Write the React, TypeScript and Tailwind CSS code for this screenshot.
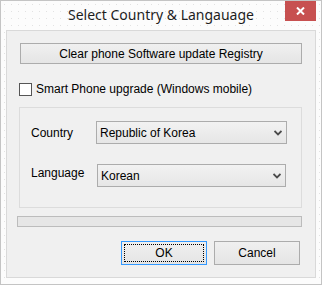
import { useState } from 'react'

const ui = { fontFamily: "'Liberation Sans', Arial, sans-serif" }

function Chevron() {
  return (
    <svg width="8" height="6" viewBox="0 0 8 6" className="shrink-0">
      <path d="M0.5 1 L4 4.5 L7.5 1" fill="none" stroke="#4a4a4a" strokeWidth="1.8" />
    </svg>
  )
}

function Select({ value, className }: { value: string; className: string }) {
  return (
    <div
      className={`flex h-[23px] items-center justify-between border border-[#acacac] bg-gradient-to-b from-[#f2f2f2] to-[#e6e6e6] pl-[3px] pr-[4px] text-[12px] text-black ${className}`}
    >
      <span>{value}</span>
      <Chevron />
    </div>
  )
}

export default function App() {
  const [smart, setSmart] = useState(false)

  return (
    <div
      style={ui}
      className="flex h-[285px] w-[322px] flex-col border border-[#c4c4c4] bg-[#fcfcfc] bg-[radial-gradient(circle,#e2e2e2_0.7px,transparent_1px)] bg-[length:7px_7px]"
    >
      <div className="grid h-[29px] grid-cols-[1fr_auto_1fr]">
        <div />
        <div
          style={{ fontFamily: "'Noto Sans', 'Open Sans', sans-serif" }}
          className="self-center pb-[2px] text-[14px] text-[#1e1e1e]"
        >
          Select Country &amp; Langauage
        </div>
        <div className="flex justify-end pr-[5px]">
          <div className="flex h-[20px] w-[31px] items-center justify-center bg-[#c75050]">
            <svg width="9" height="8" viewBox="0 0 9 8">
              <path d="M1 0.5 L8 7.5 M8 0.5 L1 7.5" stroke="#fff" strokeWidth="2" />
            </svg>
          </div>
        </div>
      </div>

      <div className="mx-[5px] mb-[6px] flex flex-1 flex-col border border-[#d9d9d9] bg-[#f0f0f0]">
        <button className="ml-[13px] mt-[12px] h-[21px] w-[282px] border border-[#acacac] bg-gradient-to-b from-[#f0f0f0] to-[#e5e5e5] text-[12px] text-black">
          Clear phone Software update Registry
        </button>

        <label className="ml-[12px] mt-[16px] flex items-center gap-[4px] text-[12px] text-black">
          <span
            onClick={() => setSmart(!smart)}
            className="h-[13px] w-[13px] border border-[#555] bg-white"
          />
          Smart Phone upgrade (Windows mobile)
        </label>

        <div className="ml-[12px] mt-[9px] flex h-[101px] w-[283px] flex-col border border-[#dcdcdc] pl-[11px]">
          <div className="mt-[13px] flex items-center text-[12px] text-black">
            <span className="w-[65px]">Country</span>
            <Select value="Republic of Korea" className="w-[191px]" />
          </div>
          <div className="mt-[20px] flex items-start text-[12px] text-black">
            <span className="w-[66px]">Language</span>
            <Select value="Korean" className="w-[189px]" />
          </div>
        </div>

        <div className="ml-[10px] mt-[8px] h-[11px] w-[285px] border border-[#bcbcbc] bg-[#e6e6e6]" />

        <div className="ml-[114px] mt-[14px] flex gap-[7px] text-[12px] text-black">
          <button className="h-[24px] w-[86px] border border-[#3399ff] bg-gradient-to-b from-[#f0f0f0] to-[#e5e5e5] outline-1 outline-offset-[-4px] outline-dotted outline-black">
            OK
          </button>
          <button className="h-[24px] w-[86px] border border-[#acacac] bg-gradient-to-b from-[#f0f0f0] to-[#e5e5e5]">
            Cancel
          </button>
        </div>
      </div>
    </div>
  )
}
